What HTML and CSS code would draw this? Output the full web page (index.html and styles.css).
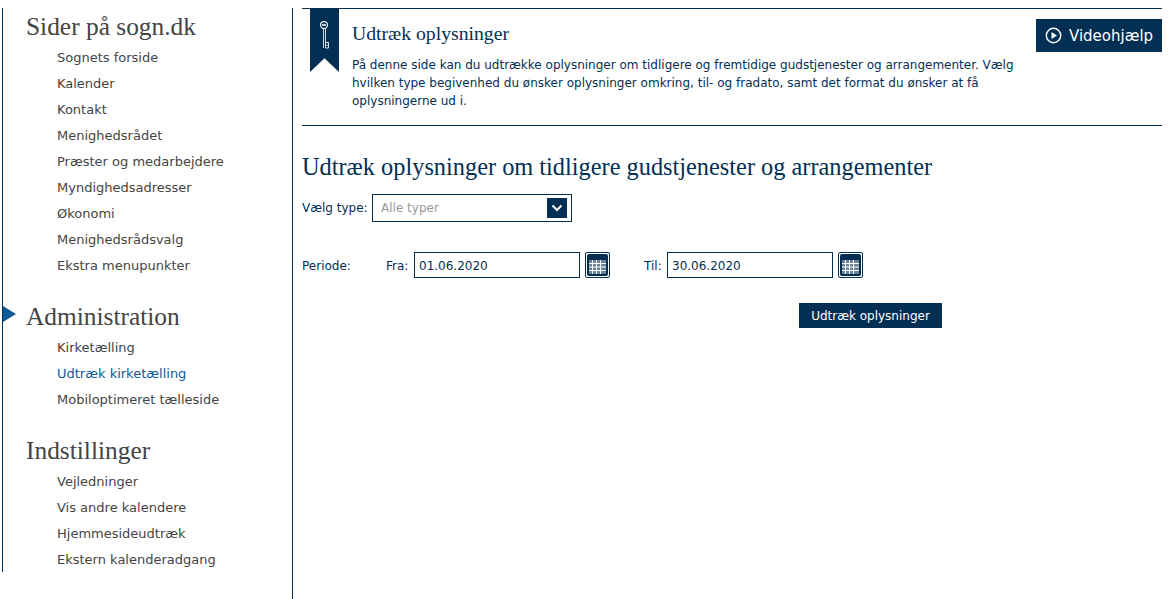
FILE: index.html
```html
<!DOCTYPE html>
<html lang="da">
<head>
<meta charset="utf-8">
<title>Udtræk oplysninger</title>
<link rel="stylesheet" href="styles.css">
</head>
<body>
<div class="page">
  <nav class="sidebar">
    <section class="nav-group">
      <h2 class="nav-title">Sider på sogn.dk</h2>
      <ul class="nav-list">
        <li>Sognets forside</li>
        <li>Kalender</li>
        <li>Kontakt</li>
        <li>Menighedsrådet</li>
        <li>Præster og medarbejdere</li>
        <li>Myndighedsadresser</li>
        <li>Økonomi</li>
        <li>Menighedsrådsvalg</li>
        <li>Ekstra menupunkter</li>
      </ul>
    </section>
    <section class="nav-group nav-group-active">
      <span class="nav-arrow"></span>
      <h2 class="nav-title">Administration</h2>
      <ul class="nav-list">
        <li>Kirketælling</li>
        <li class="current">Udtræk kirketælling</li>
        <li>Mobiloptimeret tælleside</li>
      </ul>
    </section>
    <section class="nav-group nav-group-last">
      <h2 class="nav-title">Indstillinger</h2>
      <ul class="nav-list">
        <li>Vejledninger</li>
        <li>Vis andre kalendere</li>
        <li>Hjemmesideudtræk</li>
        <li>Ekstern kalenderadgang</li>
      </ul>
    </section>
  </nav>
  <div class="divider"></div>
  <main class="main">
    <header class="intro">
      <div class="ribbon">
        <svg class="key" width="11" height="28" viewBox="0 0 11 28" fill="none" stroke="#fff">
          <circle cx="5" cy="4" r="3.5" stroke="#dfe6ec" stroke-width="1.3"/>
          <path d="M3 4H7" stroke="#fff" stroke-width="1.6"/>
          <path d="M4.5 8V27M6.5 8V27" stroke="#cfd8e0" stroke-width="1"/>
          <path d="M6.5 21.5H9.5V27H6.5" stroke="#dfe6ec" stroke-width="1"/>
          <path d="M8 23.5V25" stroke="#fff" stroke-width="1"/>
        </svg>
      </div>
      <div class="intro-text">
        <h1 class="intro-title">Udtræk oplysninger</h1>
        <p class="intro-body">På denne side kan du udtrække oplysninger om tidligere og fremtidige gudstjenester og arrangementer. Vælg hvilken type begivenhed du ønsker oplysninger omkring, til- og fradato, samt det format du ønsker at få oplysningerne ud i.</p>
      </div>
      <a class="video-btn">
        <svg width="17" height="17" viewBox="0 0 17 17" fill="none">
          <circle cx="8.5" cy="8.5" r="7.2" stroke="#fff" stroke-width="1.4"/>
          <path d="M6.5 5L12 8.5L6.5 12Z" fill="#fff"/>
        </svg>
        <span>Videohjælp</span>
      </a>
    </header>
    <h2 class="page-title">Udtræk oplysninger om tidligere gudstjenester og arrangementer</h2>
    <div class="type-row">
      <label class="label type-label">Vælg type:</label>
      <div class="select">
        <span>Alle typer</span>
        <span class="select-btn">
          <svg width="12" height="8" viewBox="0 0 12 8" fill="none"><path d="M1.5 1.5L6 6L10.5 1.5" stroke="#fff" stroke-width="2"/></svg>
        </span>
      </div>
    </div>
    <div class="period-row">
      <label class="label period-label">Periode:</label>
      <label class="label from-label">Fra:</label>
      <input class="date" value="01.06.2020">
      <span class="cal">
        <svg width="21" height="22" viewBox="0 0 21 22"><rect width="21" height="22" rx="2" fill="#032f54"/><path d="M2 6H19V20H2Z" fill="#6b8399"/><path d="M5.5 6V20M9.5 6V20M13.5 6V20M2 9.5H19M2 13H19M2 16.5H19" stroke="#fff" stroke-width="1"/></svg>
      </span>
      <label class="label to-label">Til:</label>
      <input class="date" value="30.06.2020">
      <span class="cal">
        <svg width="21" height="22" viewBox="0 0 21 22"><rect width="21" height="22" rx="2" fill="#032f54"/><path d="M2 6H19V20H2Z" fill="#6b8399"/><path d="M5.5 6V20M9.5 6V20M13.5 6V20M2 9.5H19M2 13H19M2 16.5H19" stroke="#fff" stroke-width="1"/></svg>
      </span>
    </div>
    <div class="action-row">
      <button class="submit">Udtræk oplysninger</button>
    </div>
  </main>
</div>
</body>
</html>
```
FILE: styles.css
```css
* { box-sizing: border-box; }
html, body { margin: 0; padding: 0; background: #fff; }
body { font-family: "DejaVu Sans", Verdana, sans-serif; font-size: 12px; color: #032f54; overflow: hidden; }
.page { display: flex; height: 599px; padding-top: 8px; padding-left: 2px; }
.sidebar { width: 290px; height: 564px; border-left: 1px solid #032f54; flex: none; }
.nav-group { position: relative; padding-left: 23px; }
.nav-group-active { margin-top: 19px; }
.nav-group-last { margin-top: 19px; }
.nav-title { margin: 0; font-family: "Liberation Serif", Georgia, serif; font-weight: 400; font-size: 25.4px; line-height: 36px; height: 36px; color: #444; }
.nav-list { list-style: none; margin: 1px 0 0; padding: 0 0 0 31px; color: #444; font-size: 13px; }
.nav-list li { height: 26px; line-height: 26px; }
.nav-list .current { color: #0c5a96; }
.nav-arrow { position: absolute; left: 0; top: 8px; width: 0; height: 0; border-left: 13px solid #0c5a96; border-top: 8px solid transparent; border-bottom: 8px solid transparent; }
.divider { width: 1px; flex: none; background: #032f54; margin-bottom: -8px; }
.main { width: 860px; margin-left: 9px; flex: none; }
.intro { display: flex; height: 118px; border-top: 1px solid #032f54; border-bottom: 1px solid #032f54; padding-left: 8px; }
.ribbon { width: 29px; height: 63px; flex: none; background: #032f54; clip-path: polygon(0 0, 100% 0, 100% 100%, 50% 78%, 0 100%); display: flex; justify-content: center; padding-top: 12px; }
.intro-text { width: 684px; margin-left: 13px; flex: none; }
.intro-title { margin: 13px 0 0; font-family: "Liberation Serif", Georgia, serif; font-weight: 400; font-size: 19.7px; line-height: 22px; }
.intro-body { margin: 12px 0 0; font-size: 12px; line-height: 18px; }
.video-btn { margin: 10px 0 0 auto; width: 126px; height: 33px; background: #032f54; color: #fff; font-size: 15px; display: flex; align-items: center; gap: 7px; padding-left: 9px; }
.page-title { margin: 27px 0 0; font-family: "Liberation Serif", Georgia, serif; font-weight: 400; font-size: 24.35px; line-height: 28px; }
.type-row { display: flex; align-items: center; margin-top: 13px; }
.label { font-size: 12px; line-height: 16px; }
.type-label { width: 70px; flex: none; }
.select { width: 200px; height: 28px; border: 1px solid #032f54; display: flex; align-items: center; justify-content: space-between; padding: 0 4px 0 8px; color: #999; font-size: 12px; }
.select-btn { width: 20px; height: 20px; background: #032f54; display: flex; align-items: center; justify-content: center; }
.period-row { display: flex; align-items: center; margin-top: 30px; }
.period-label { width: 84px; padding-top: 2px; }
.from-label { width: 28px; padding-top: 2px; }
.to-label { width: 23px; margin-left: 34px; padding-top: 2px; }
.date { width: 166px; height: 26px; padding: 2px 4px 0; border: 1px solid #032f54; border-radius: 0; outline: 0; font-family: inherit; font-size: 12px; color: #032f54; background: #fff; }
.cal { width: 25px; height: 26px; margin-left: 5px; border: 1px solid #032f54; border-radius: 2px; display: flex; align-items: center; justify-content: center; }
.action-row { display: flex; padding-left: 497px; margin-top: 25px; }
.submit { width: 143px; height: 25px; padding: 0; background: #032f54; color: #fff; border: 0; font-family: inherit; font-size: 12px; }
```
